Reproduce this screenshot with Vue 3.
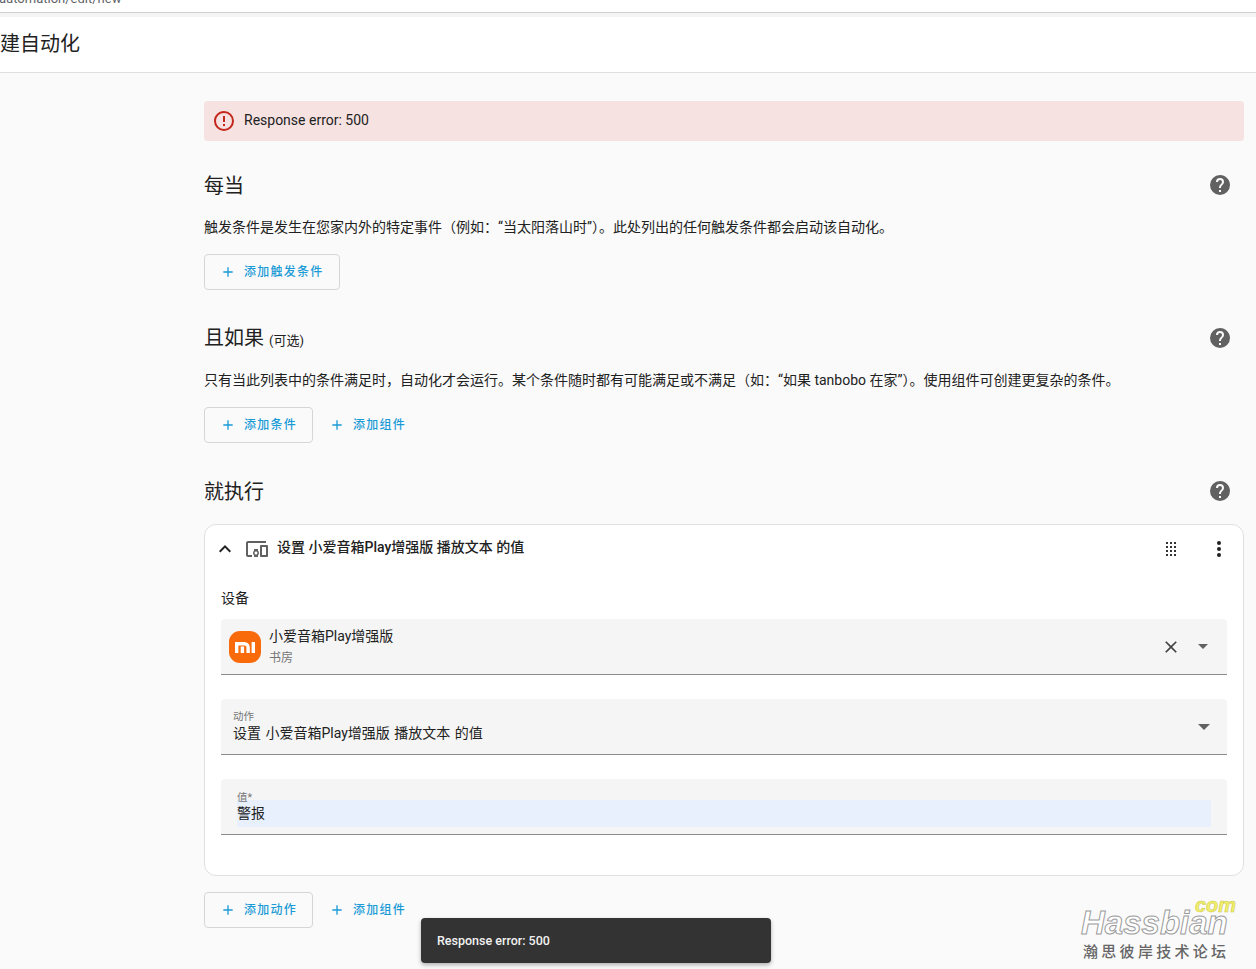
<script setup>
const helpPath = 'M15.07 11.25l-.9.92C13.45 12.89 13 13.5 13 15h-2v-.5c0-1.11.45-2.11 1.17-2.83l1.24-1.26c.37-.36.59-.86.59-1.41a2 2 0 0 0-2-2 2 2 0 0 0-2 2H8a4 4 0 0 1 4-4 4 4 0 0 1 4 4c0 .88-.36 1.67-.93 2.25M13 19h-2v-2h2M12 2A10 10 0 0 0 2 12a10 10 0 0 0 10 10 10 10 0 0 0 10-10c0-5.53-4.5-10-10-10z'
const plusPath = 'M19 13h-6v6h-2v-6H5v-2h6V5h2v6h6v2z'
</script>

<template>
  <div class="page" lang="zh">
    <div class="url-bar"><span class="url">automation/edit/new</span></div>
    <div class="url-gap"></div>
    <header class="top-bar"><h1 class="page-title">建自动化</h1></header>

    <main class="content">
      <div class="alert">
        <svg class="alert-icon" viewBox="0 0 24 24">
          <path d="M11 15h2v2h-2zm0-8h2v6h-2zm1-5C6.47 2 2 6.5 2 12a10 10 0 0 0 10 10 10 10 0 0 0 10-10A10 10 0 0 0 12 2zm0 18a8 8 0 1 1 0-16 8 8 0 0 1 0 16z" />
        </svg>
        <span class="alert-text">Response error: 500</span>
      </div>

      <section class="block first">
        <div class="block-head">
          <h2>每当</h2>
          <svg class="help" viewBox="0 0 24 24"><path :d="helpPath" /></svg>
        </div>
        <p class="desc">触发条件是发生在您家内外的特定事件（例如：“当太阳落山时”）。此处列出的任何触发条件都会启动该自动化。</p>
        <div class="actions">
          <button class="btn outlined"><svg class="plus" viewBox="0 0 24 24"><path :d="plusPath" /></svg><span>添加触发条件</span></button>
        </div>
      </section>

      <section class="block">
        <div class="block-head">
          <h2>且如果 <small>(可选)</small></h2>
          <svg class="help" viewBox="0 0 24 24"><path :d="helpPath" /></svg>
        </div>
        <p class="desc">只有当此列表中的条件满足时，自动化才会运行。某个条件随时都有可能满足或不满足（如：“如果 tanbobo 在家”）。使用组件可创建更复杂的条件。</p>
        <div class="actions">
          <button class="btn outlined"><svg class="plus" viewBox="0 0 24 24"><path :d="plusPath" /></svg><span>添加条件</span></button>
          <button class="btn"><svg class="plus" viewBox="0 0 24 24"><path :d="plusPath" /></svg><span>添加组件</span></button>
        </div>
      </section>

      <section class="block">
        <div class="block-head">
          <h2>就执行</h2>
          <svg class="help" viewBox="0 0 24 24"><path :d="helpPath" /></svg>
        </div>

        <div class="card">
          <div class="card-head">
            <svg class="chevron" viewBox="0 0 24 24"><path d="M7.41 15.41 12 10.83l4.59 4.58L18 14l-6-6-6 6z" /></svg>
            <svg class="device-icon" viewBox="0 0 24 24"><path d="M3 6h18V4H3c-1.1 0-2 .9-2 2v12c0 1.1.9 2 2 2h4v-2H3V6zm10 6H9v1.78c-.61.55-1 1.33-1 2.22s.39 1.67 1 2.22V20h4v-1.78c.61-.55 1-1.34 1-2.22s-.39-1.67-1-2.22V12zm-2 5.5c-.83 0-1.5-.67-1.5-1.5s.67-1.5 1.5-1.5 1.5.67 1.5 1.5-.67 1.5-1.5 1.5zM22 8h-6c-.5 0-1 .5-1 1v10c0 .5.5 1 1 1h6c.5 0 1-.5 1-1V9c0-.5-.5-1-1-1zm-1 10h-4v-8h4v8z" /></svg>
            <span class="card-title">设置 小爱音箱Play增强版 播放文本 的值</span>
            <svg class="drag" viewBox="0 0 24 24"><path d="M7 19v-2h2v2H7m4 0v-2h2v2h-2m4 0v-2h2v2h-2m-8-4v-2h2v2H7m4 0v-2h2v2h-2m4 0v-2h2v2h-2m-8-4V9h2v2H7m4 0V9h2v2h-2m4 0V9h2v2h-2M7 7V5h2v2H7m4 0V5h2v2h-2m4 0V5h2v2h-2z" /></svg>
            <svg class="more" viewBox="0 0 24 24"><path d="M12 16a2 2 0 1 1 0 4 2 2 0 0 1 0-4zm0-6a2 2 0 1 1 0 4 2 2 0 0 1 0-4zm0-6a2 2 0 1 1 0 4 2 2 0 0 1 0-4z" /></svg>
          </div>

          <div class="card-body">
            <div class="field-label">设备</div>
            <div class="field device-field">
              <svg class="mi-logo" viewBox="0 0 32 32">
                <rect width="32" height="32" rx="11" fill="#f96a0a" />
                <path d="M7.7 22V12.7h7.8a3.6 3.6 0 0 1 3.6 3.6V22M13.4 22v-6.5M24.3 11v11" fill="none" stroke="#fff" stroke-width="3.4" />
              </svg>
              <div class="device-text">
                <div class="device-name">小爱音箱Play增强版</div>
                <div class="device-room">书房</div>
              </div>
              <svg class="clear" viewBox="0 0 24 24"><path d="M19 6.41 17.59 5 12 10.59 6.41 5 5 6.41 10.59 12 5 17.59 6.41 19 12 13.41 17.59 19 19 17.59 13.41 12z" /></svg>
              <span class="caret small"></span>
            </div>

            <div class="field select-field">
              <div class="select-text">
                <div class="float-label">动作</div>
                <div class="select-value">设置 小爱音箱Play增强版 播放文本 的值</div>
              </div>
              <span class="caret"></span>
            </div>

            <div class="field value-field">
              <div class="float-label">值*</div>
              <div class="value-input">警报</div>
            </div>
          </div>
        </div>

        <div class="actions below">
          <button class="btn outlined"><svg class="plus" viewBox="0 0 24 24"><path :d="plusPath" /></svg><span>添加动作</span></button>
          <button class="btn"><svg class="plus" viewBox="0 0 24 24"><path :d="plusPath" /></svg><span>添加组件</span></button>
        </div>
      </section>
    </main>

    <div class="toast">Response error: 500</div>

    <div class="watermark">
      <span class="wm-name">Hassbian</span>
      <span class="wm-com">com</span>
      <span class="wm-cn">瀚思彼岸技术论坛</span>
    </div>
  </div>
</template>

<style>
html,
body {
  margin: 0;
  background: #fafafa;
  overflow: hidden;
}
</style>

<style scoped>
.page {
  position: relative;
  height: 969px;
  overflow: hidden;
  background: #fafafa;
  color: #212121;
  font-family: Roboto, "Noto Sans CJK SC", sans-serif;
  font-size: 14px;
}

.url-bar {
  height: 12px;
  background: #fff;
  border-bottom: 1px solid #d0d0d0;
  overflow: hidden;
}

.url {
  display: block;
  margin-top: -9px;
  margin-left: -1px;
  font-size: 13px;
  line-height: 16px;
  color: #5f6368;
}

.url-gap {
  height: 4px;
  background: #f4f4f4;
}

.top-bar {
  height: 55px;
  background: #fff;
  border-bottom: 1px solid #e0e0e0;
  display: flex;
  align-items: center;
}

.page-title {
  margin: 0 0 4px 0;
  font-size: 20px;
  font-weight: 400;
  color: #212121;
}

.content {
  padding: 28px 12px 0 204px;
}

.alert {
  height: 40px;
  box-sizing: border-box;
  display: flex;
  align-items: center;
  gap: 8px;
  padding-left: 8px;
  background: #f6e2e1;
  border-radius: 4px;
  color: #212121;
}

.alert-text {
  margin-top: -2px;
}

.alert-icon {
  width: 24px;
  height: 24px;
  fill: #c4281c;
}

.block {
  margin-top: 32px;
}

.block.first {
  margin-top: 28px;
}

.block-head {
  display: flex;
  align-items: center;
  justify-content: space-between;
  height: 32px;
  padding-right: 12px;
}

.block-head h2 {
  margin: 2px 0 0;
  font-size: 20px;
  font-weight: 400;
  line-height: 32px;
}

.block-head small {
  font-size: 13px;
}

.help {
  width: 24px;
  height: 24px;
  fill: #616161;
}

.desc {
  margin: 0;
  padding-top: 16px;
  line-height: 20px;
  font-size: 14px;
}

.actions {
  display: flex;
  margin-top: 17px;
}

.actions.below {
  margin-top: 16px;
}

.btn {
  height: 36px;
  box-sizing: border-box;
  display: flex;
  align-items: center;
  padding: 0 15px 0 15px;
  background: transparent;
  border: 1px solid transparent;
  border-radius: 4px;
  color: #1b9bd6;
  font-family: inherit;
  font-size: 12px;
  letter-spacing: 1.25px;
  font-weight: 500;
}

.btn span {
  margin-top: -4px;
}

.btn.outlined {
  border-color: #d6d6d6;
}

.plus {
  width: 16px;
  height: 16px;
  margin-right: 8px;
  fill: currentColor;
}

.card {
  margin-top: 17px;
  height: 352px;
  box-sizing: border-box;
  background: #fff;
  border: 1px solid #e0e0e0;
  border-radius: 12px;
}

.card-head {
  display: flex;
  align-items: center;
  height: 46px;
  padding: 0 12px 0 8px;
}

.chevron {
  width: 24px;
  height: 24px;
  fill: #212121;
  margin-top: 2px;
}

.device-icon {
  width: 24px;
  height: 24px;
  margin-left: 8px;
  fill: #616161;
  margin-top: 2px;
}

.card-title {
  margin: -5px 0 0 8px;
  flex: 1;
  font-weight: 500;
  font-size: 14px;
}

.drag {
  width: 24px;
  height: 24px;
  margin-right: 24px;
  margin-top: 2px;
  fill: #333;
}

.more {
  width: 24px;
  height: 24px;
  margin-top: 2px;
  fill: #212121;
}

.card-body {
  padding: 0 16px;
}

.field-label {
  margin-top: 17px;
  height: 20px;
  line-height: 20px;
}

.field {
  box-sizing: border-box;
  height: 56px;
  background: #f5f5f5;
  border-radius: 4px 4px 0 0;
  border-bottom: 1px solid #8c8c8c;
  display: flex;
  align-items: center;
}

.device-field {
  margin-top: 11px;
  padding: 0 19px 0 8px;
}

.mi-logo {
  width: 32px;
  height: 32px;
}

.device-text {
  flex: 1;
  margin-left: 8px;
}

.device-name {
  line-height: 20px;
  margin-top: -2px;
}

.device-room {
  margin-top: 4px;
  font-size: 12px;
  line-height: 16px;
  color: #757575;
}

.clear {
  width: 20px;
  height: 20px;
  fill: #424242;
  margin-right: 17px;
}

.caret {
  width: 0;
  height: 0;
  border-left: 6px solid transparent;
  border-right: 6px solid transparent;
  border-top: 6px solid #616161;
}

.caret.small {
  border-left-width: 5px;
  border-right-width: 5px;
  border-top-width: 5px;
}

.select-field {
  margin-top: 24px;
  padding: 0 17px 0 12px;
  justify-content: space-between;
}

.select-text {
  padding-top: 1px;
}

.float-label {
  font-size: 10.5px;
  line-height: 12px;
  color: #757575;
}

.select-value {
  line-height: 20px;
  word-spacing: 1px;
}

.value-field {
  margin-top: 24px;
  padding: 0 16px;
  display: block;
}

.value-field .float-label {
  padding-top: 13px;
}

.value-input {
  height: 27px;
  line-height: 26px;
  margin-top: -4px;
  background: #e8f0fe;
}

.toast {
  position: absolute;
  left: 421px;
  top: 918px;
  width: 350px;
  height: 45px;
  box-sizing: border-box;
  padding-left: 16px;
  display: flex;
  align-items: center;
  background: #333;
  color: #f1f1f1;
  border-radius: 4px;
  font-size: 12.5px;
  font-weight: 500;
  box-shadow: 0 2px 4px rgba(0, 0, 0, 0.3);
}

.watermark {
  position: absolute;
  left: 1081px;
  top: 896px;
  width: 160px;
  height: 68px;
  font-family: "Liberation Sans", "Noto Sans CJK SC", sans-serif;
}

.wm-name {
  position: absolute;
  left: 0;
  top: 8px;
  font-size: 33px;
  font-style: italic;
  font-weight: 700;
  color: #fff;
  -webkit-text-stroke: 1px #9a9a9a;
}

.wm-com {
  position: absolute;
  left: 114px;
  top: -2px;
  font-size: 20px;
  font-style: italic;
  font-weight: 700;
  color: #f2f06a;
  -webkit-text-stroke: 0.5px #c9c64a;
}

.wm-cn {
  position: absolute;
  left: 2px;
  top: 44px;
  font-size: 15px;
  font-weight: 500;
  letter-spacing: 3.3px;
  color: #666;
  white-space: nowrap;
}
</style>
